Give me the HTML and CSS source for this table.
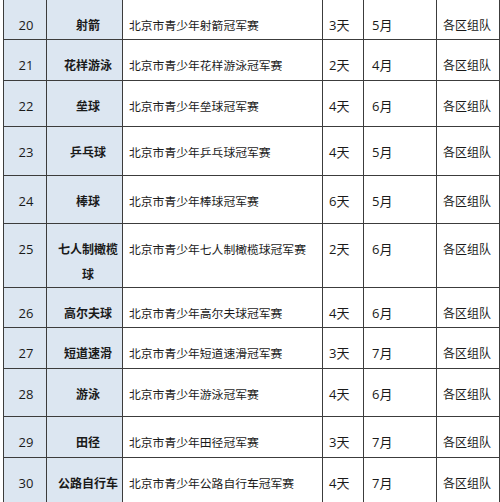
FILE: index.html
```html
<!DOCTYPE html>
<html lang="zh-CN">
<head>
<meta charset="utf-8">
<title>北京市青少年冠军赛</title>
<link rel="stylesheet" href="styles.css">
</head>
<body>
<table class="sched">
  <colgroup>
    <col class="c-no"><col class="c-name"><col class="c-desc"><col class="c-days"><col class="c-month"><col class="c-org">
  </colgroup>
  <tbody>
    <tr class="h40"><td class="no">20</td><td class="name">射箭</td><td class="desc">北京市青少年射箭冠军赛</td><td class="days">3天</td><td class="month">5月</td><td class="org">各区组队</td></tr>
    <tr class="h41"><td class="no">21</td><td class="name">花样游泳</td><td class="desc">北京市青少年花样游泳冠军赛</td><td class="days">2天</td><td class="month">4月</td><td class="org">各区组队</td></tr>
    <tr class="h46"><td class="no">22</td><td class="name">垒球</td><td class="desc">北京市青少年垒球冠军赛</td><td class="days">4天</td><td class="month">6月</td><td class="org">各区组队</td></tr>
    <tr class="h49"><td class="no">23</td><td class="name">乒乓球</td><td class="desc">北京市青少年乒乓球冠军赛</td><td class="days">4天</td><td class="month">5月</td><td class="org">各区组队</td></tr>
    <tr class="h48"><td class="no">24</td><td class="name">棒球</td><td class="desc">北京市青少年棒球冠军赛</td><td class="days">6天</td><td class="month">5月</td><td class="org">各区组队</td></tr>
    <tr class="h64"><td class="no">25</td><td class="name">七人制橄榄<br>球</td><td class="desc">北京市青少年七人制橄榄球冠军赛</td><td class="days">2天</td><td class="month">6月</td><td class="org">各区组队</td></tr>
    <tr class="h40"><td class="no">26</td><td class="name">高尔夫球</td><td class="desc">北京市青少年高尔夫球冠军赛</td><td class="days">4天</td><td class="month">6月</td><td class="org">各区组队</td></tr>
    <tr class="h41"><td class="no">27</td><td class="name">短道速滑</td><td class="desc">北京市青少年短道速滑冠军赛</td><td class="days">3天</td><td class="month">7月</td><td class="org">各区组队</td></tr>
    <tr class="h48"><td class="no">28</td><td class="name">游泳</td><td class="desc">北京市青少年游泳冠军赛</td><td class="days">4天</td><td class="month">6月</td><td class="org">各区组队</td></tr>
    <tr class="h41"><td class="no">29</td><td class="name">田径</td><td class="desc">北京市青少年田径冠军赛</td><td class="days">3天</td><td class="month">7月</td><td class="org">各区组队</td></tr>
    <tr class="h50"><td class="no">30</td><td class="name">公路自行车</td><td class="desc">北京市青少年公路自行车冠军赛</td><td class="days">4天</td><td class="month">7月</td><td class="org">各区组队</td></tr>
  </tbody>
</table>
</body>
</html>
```

FILE: styles.css
```css
html, body {
  margin: 0;
  padding: 0;
  background: #ffffff;
  overflow: hidden;
}

.sched {
  margin: -1px 0 0 3px;
  border-collapse: collapse;
  table-layout: fixed;
  width: 497px;
  font-family: "Open Sans", "Noto Sans CJK SC", sans-serif;
  font-size: 12px;
  color: #1a1a1a;
}

.c-no { width: 43px; }
.c-name { width: 76px; }
.c-desc { width: 200px; }
.c-days { width: 41px; }
.c-month { width: 73px; }
.c-org { width: 63px; }

.sched td {
  border: 1px solid #3c3c3c;
  vertical-align: top;
  padding: 13px 0 0 0;
  line-height: 25px;
  white-space: nowrap;
  box-sizing: border-box;
}

.sched td.no {
  background: #dce6f1;
  text-align: center;
  font-size: 13px;
  padding-left: 2px;
}

.sched td.name {
  background: #dce6f1;
  text-align: center;
  font-weight: bold;
  padding-left: 7px;
}

.sched td.desc { padding-left: 6px; font-size: 11.8px; }
.sched td.days { padding-left: 6px; font-size: 13px; }
.sched td.month { padding-left: 8px; font-size: 13px; }
.sched td.org { padding-left: 6px; }

.h40 td { height: 40px; }
.h41 td { height: 41px; }
.h46 td { height: 46px; }
.h48 td { height: 48px; }
.h49 td { height: 49px; }
.h50 td { height: 50px; }
.h64 td { height: 64px; }
```
